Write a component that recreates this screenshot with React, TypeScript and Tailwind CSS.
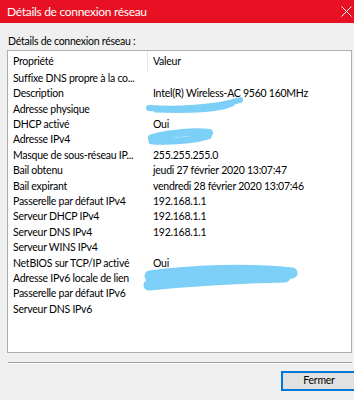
const rows: [string, string][] = [
  ["Suffixe DNS propre à la co...", ""],
  ["Description", "Intel(R) Wireless-AC 9560 160MHz"],
  ["Adresse physique", ""],
  ["DHCP activé", "Oui"],
  ["Adresse IPv4", ""],
  ["Masque de sous-réseau IP...", "255.255.255.0"],
  ["Bail obtenu", "jeudi 27 février 2020 13:07:47"],
  ["Bail expirant", "vendredi 28 février 2020 13:07:46"],
  ["Passerelle par défaut IPv4", "192.168.1.1"],
  ["Serveur DHCP IPv4", "192.168.1.1"],
  ["Serveur DNS IPv4", "192.168.1.1"],
  ["Serveur WINS IPv4", ""],
  ["NetBIOS sur TCP/IP activé", "Oui"],
  ["Adresse IPv6 locale de lien", ""],
  ["Passerelle par défaut IPv6", ""],
  ["Serveur DNS IPv6", ""],
]

// blue marker strokes hiding private addresses
const Scribbles = () => (
  <svg className="pointer-events-none absolute left-0 top-0" width="354" height="400" fill="none" stroke="#7ccff6" strokeLinecap="round" strokeLinejoin="round">
    <path d="M149 108 C175 110 215 108 240 100" strokeWidth="6" />
    <path d="M156 110 C185 111 220 110 232 104" strokeWidth="5" />
    <path d="M152 138 C170 133 195 131 209 133" strokeWidth="8" />
    <path d="M152 141 C175 142 195 140 208 136" strokeWidth="7" />
    <path d="M150 276 C190 270 250 268 292 273" strokeWidth="11" />
    <path d="M149 285 C190 281 240 278 285 277" strokeWidth="11" />
  </svg>
)

export default function App() {
  return (
    <div className="relative h-[400px] w-[354px] overflow-hidden bg-[#f0f0f0] text-[10.5px] tracking-[-0.25px] text-black" style={{ fontFamily: 'Lato, "Liberation Sans", sans-serif' }}>
      <div className="flex h-[23px] items-center justify-between bg-[#e81123] pl-[7px] pr-[2px] text-white">
        <span className="text-[12px] tracking-[-0.3px]">Détails de connexion réseau</span>
        <svg width="11" height="11" viewBox="0 0 11 11" stroke="white" strokeWidth="1">
          <path d="M0.5 0.5 L10.5 10.5 M10.5 0.5 L0.5 10.5" />
        </svg>
      </div>

      <div className="px-[8px] pt-[11px]">
        <div className="leading-[15px]">Détails de connexion réseau :</div>
        <div className="mt-[1px] -mr-[6px] ml-[-1px] h-[303px] border border-[#adadad] bg-white">
          <div className="flex h-[20px] items-center">
            <div className="w-[139px] pl-[5px] pt-[2px]">Propriété</div>
            <div className="h-full w-px bg-[#e5e5e5]" />
            <div className="pl-[5px] pt-[2px]">Valeur</div>
          </div>
          {rows.map(([k, v]) => (
            <div key={k} className="flex h-[15.4px] items-center">
              <div className="w-[140px] whitespace-nowrap pl-[5px]">{k}</div>
              <div className="whitespace-nowrap pl-[5px]">{v}</div>
            </div>
          ))}
        </div>
        <div className="mt-[9px] -mr-[6px] border-t border-b border-t-[#a0a0a0] border-b-white" />
        <div className="mt-[7px] -mr-[11px] flex justify-end">
          <button className="h-[20px] w-[76px] border border-[#0078d7] bg-[#e1e1e1] shadow-[inset_0_0_0_1px_#0078d7]">Fermer</button>
        </div>
      </div>
      <Scribbles />
    </div>
  )
}
